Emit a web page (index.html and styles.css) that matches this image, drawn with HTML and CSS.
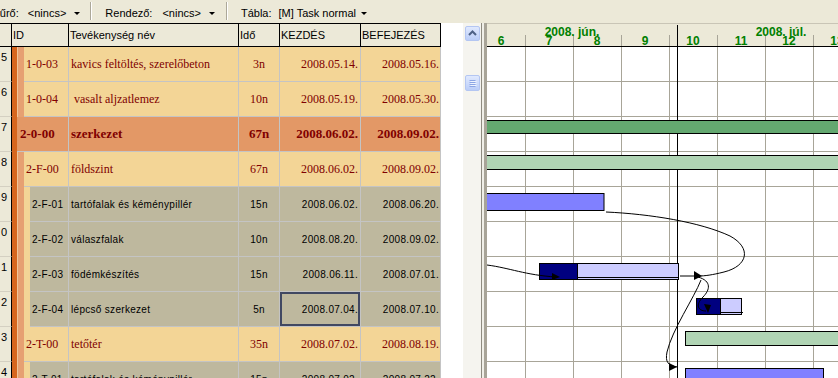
FILE: index.html
```html
<!DOCTYPE html>
<html>
<head>
	<title>Ütemterv</title>
	<link rel="stylesheet" href="styles.css">
	<meta charset="utf-8">
</head>
<body>
	<div class="toolbar">
		<span class="tb-label first">Szűrő:</span><span class="tb-value v1">&lt;nincs&gt;</span><span class="drop d1"></span>
		<span class="sep s1"></span>
		<span class="tb-label l2">Rendező:</span><span class="tb-value v2">&lt;nincs&gt;</span><span class="drop d2"></span>
		<span class="sep s2"></span>
		<span class="tb-label l3">Tábla:</span><span class="tb-value v3">[M] Task normal</span><span class="drop d3"></span>
	</div>

	<div class="main">
		<div class="table">
			<div class="thead">
				<div class="hcell rownum"></div>
				<div class="hcell h-id">ID</div>
				<div class="hcell h-name">Tevékenység név</div>
				<div class="hcell h-dur">Idő</div>
				<div class="hcell h-start">KEZDÉS</div>
				<div class="hcell h-end">BEFEJEZÉS</div>
			</div>

			<div class="row lvl2">
				<div class="rownum">5</div>
				<div class="strips"><i class="s-or"></i><i class="s-gap"></i><i class="s-sal"></i></div>
				<div class="cells">
					<div class="c-id">1-0-03</div><div class="c-name">kavics feltöltés, szerelőbeton</div><div class="c-dur">3n</div><div class="c-start">2008.05.14.</div><div class="c-end">2008.05.16.</div>
				</div>
			</div>
			<div class="row lvl2">
				<div class="rownum">6</div>
				<div class="strips"><i class="s-or"></i><i class="s-gap"></i><i class="s-sal"></i></div>
				<div class="cells">
					<div class="c-id">1-0-04</div><div class="c-name"> vasalt aljzatlemez</div><div class="c-dur">10n</div><div class="c-start">2008.05.19.</div><div class="c-end">2008.05.30.</div>
				</div>
			</div>
			<div class="row lvl1">
				<div class="rownum">7</div>
				<div class="strips"><i class="s-or"></i></div>
				<div class="cells">
					<div class="c-id">2-0-00</div><div class="c-name">szerkezet</div><div class="c-dur">67n</div><div class="c-start">2008.06.02.</div><div class="c-end">2008.09.02.</div>
				</div>
			</div>
			<div class="row lvl2">
				<div class="rownum">8</div>
				<div class="strips"><i class="s-or"></i><i class="s-gap"></i><i class="s-sal"></i></div>
				<div class="cells">
					<div class="c-id">2-F-00</div><div class="c-name">földszint</div><div class="c-dur">67n</div><div class="c-start">2008.06.02.</div><div class="c-end">2008.09.02.</div>
				</div>
			</div>
			<div class="row lvl3">
				<div class="rownum">9</div>
				<div class="strips"><i class="s-or"></i><i class="s-gap"></i><i class="s-sal"></i><i class="s-tan"></i></div>
				<div class="cells">
					<div class="c-id">2-F-01</div><div class="c-name">tartófalak és kéménypillér</div><div class="c-dur">15n</div><div class="c-start">2008.06.02.</div><div class="c-end">2008.06.20.</div>
				</div>
			</div>
			<div class="row lvl3">
				<div class="rownum">0</div>
				<div class="strips"><i class="s-or"></i><i class="s-gap"></i><i class="s-sal"></i><i class="s-tan"></i></div>
				<div class="cells">
					<div class="c-id">2-F-02</div><div class="c-name">válaszfalak</div><div class="c-dur">10n</div><div class="c-start">2008.08.20.</div><div class="c-end">2008.09.02.</div>
				</div>
			</div>
			<div class="row lvl3">
				<div class="rownum">1</div>
				<div class="strips"><i class="s-or"></i><i class="s-gap"></i><i class="s-sal"></i><i class="s-tan"></i></div>
				<div class="cells">
					<div class="c-id">2-F-03</div><div class="c-name">födémkészítés</div><div class="c-dur">15n</div><div class="c-start">2008.06.11.</div><div class="c-end">2008.07.01.</div>
				</div>
			</div>
			<div class="row lvl3">
				<div class="rownum">2</div>
				<div class="strips"><i class="s-or"></i><i class="s-gap"></i><i class="s-sal"></i><i class="s-tan"></i></div>
				<div class="cells">
					<div class="c-id">2-F-04</div><div class="c-name">lépcső szerkezet</div><div class="c-dur">5n</div><div class="c-start focus">2008.07.04.</div><div class="c-end">2008.07.10.</div>
				</div>
			</div>
			<div class="row lvl2">
				<div class="rownum">3</div>
				<div class="strips"><i class="s-or"></i><i class="s-gap"></i><i class="s-sal"></i></div>
				<div class="cells">
					<div class="c-id">2-T-00</div><div class="c-name">tetőtér</div><div class="c-dur">35n</div><div class="c-start">2008.07.02.</div><div class="c-end">2008.08.19.</div>
				</div>
			</div>
			<div class="row lvl3">
				<div class="rownum">4</div>
				<div class="strips"><i class="s-or"></i><i class="s-gap"></i><i class="s-sal"></i><i class="s-tan"></i></div>
				<div class="cells">
					<div class="c-id">2-T-01</div><div class="c-name">tartófalak és kéménypillér</div><div class="c-dur">15n</div><div class="c-start">2008.07.02.</div><div class="c-end">2008.07.22.</div>
				</div>
			</div>
		</div>

		<div class="blank"></div>

		<div class="scroll">
			<div class="sbtn">
				<svg width="13" height="13" viewBox="0 0 13 13"><path d="M3 8 L6.5 4.5 L10 8" fill="none" stroke="#4D6185" stroke-width="2"/></svg>
			</div>
			<div class="sbtn thumb">
				<svg width="13" height="14" viewBox="0 0 13 14"><path d="M3.5 4.5H9.5M3.5 6.5H9.5M3.5 8.5H9.5M3.5 10.5H9.5" stroke="#8CA5E4"/><path d="M4.5 5.5H10.5M4.5 7.5H10.5M4.5 9.5H10.5" stroke="#EEF4FE"/></svg>
			</div>
		</div>

		<div class="splitter"></div>

		<!-- gantt canvas, drawn in page coordinates -->
		<svg class="chart" width="351" height="355" viewBox="487 23 351 355">
			<rect x="487" y="23" width="351" height="23" fill="#ECE9D8"/>
			<path d="M487 23.5H838" stroke="#C9C5B6"/>
			<g stroke="#A8A598">
				<path d="M525.5 35V46M573.5 35V46M621.5 35V46M669.5 35V46M717.5 35V46M765.5 35V46M813.5 35V46"/>
			</g>
			<g class="months">
				<text x="572" y="36">2008. jún.</text>
				<text x="781" y="36">2008. júl.</text>
			</g>
			<g class="days">
				<text x="501" y="45">6</text>
				<text x="549" y="45">7</text>
				<text x="597" y="45">8</text>
				<text x="645" y="45">9</text>
				<text x="693" y="45">10</text>
				<text x="741" y="45">11</text>
				<text x="789" y="45">12</text>
				<text x="837" y="45">13</text>
			</g>
			<path d="M487 46.5H838" stroke="#000"/>

			<rect x="487" y="47" width="351" height="331" fill="#fff"/>
			<g stroke="#A8A598">
				<path d="M525.5 47V378M573.5 47V378M621.5 47V378M669.5 47V378M717.5 47V378M765.5 47V378M813.5 47V378"/>
				<path d="M487 81.5H838M487 116.5H838M487 151.5H838M487 186.5H838M487 221.5H838M487 256.5H838M487 291.5H838M487 326.5H838M487 361.5H838"/>
			</g>
			<path d="M677.5 25V378" stroke="#000"/>

			<g stroke="#000">
				<rect x="485" y="120.5" width="360" height="13" fill="#64A870"/>
				<rect x="485" y="155.5" width="360" height="14" fill="#B0D4B4"/>
				<rect x="485" y="193.5" width="119" height="17" fill="#8080FF"/>
				<rect x="539.5" y="263.5" width="38" height="16" fill="#000080"/>
				<rect x="577.5" y="263.5" width="101" height="16" fill="#CCCCFF"/>
				<path d="M577 277.5H679"/>
				<rect x="696.5" y="298.5" width="24" height="16" fill="#000080"/>
				<rect x="720.5" y="298.5" width="21" height="16" fill="#CCCCFF"/>
				<path d="M720 312.5H743"/>
				<rect x="685.5" y="331.5" width="160" height="14" fill="#B0D4B4"/>
				<rect x="685.5" y="368.5" width="138" height="17" fill="#8080FF"/>
			</g>

			<g fill="none" stroke="#000">
				<path d="M487 265 C510 268, 525 275, 556 277"/>
				<path d="M606 212 C650 214, 700 222, 730 236 C752 248, 748 266, 724 272 C712 275, 705 276, 698 276"/>
				<path d="M680 276 L700 276"/>
				<path d="M698 277 C712 281, 710 290, 703 297 C695 305, 698 311, 706 311"/>
				<path d="M701 280 C694 298, 672 330, 667 352 C665 362, 668 366, 678 367"/>
			</g>
			<g fill="#000">
				<polygon points="552,273 560,277 552,280"/>
				<polygon points="694,271 702,276 694,280"/>
				<polygon points="704,304 711,305 708,313"/>
				<polygon points="669,363 677,367 669,371"/>
			</g>
		</svg>
	</div>
</body>
</html>
```

FILE: styles.css
```css
html, body {
	margin: 0;
	padding: 0;
}

body {
	width: 838px;
	height: 378px;
	overflow: hidden;
	background: #ECE9D8;
	font-family: "Liberation Sans", Arial, sans-serif;
	font-size: 11px;
	color: #000;
}

/* toolbar */

.toolbar {
	display: flex;
	align-items: center;
	height: 23px;
	box-sizing: border-box;
	padding-top: 3px;
	background: #ECE9D8;
	white-space: nowrap;
	overflow: hidden;
}

.first { margin-left: -13px; }
.v1 { margin-left: 9px; }
.d1 { margin-left: 8px; }
.s1 { margin-left: 10px; }
.l2 { margin-left: 13px; }
.v2 { margin-left: 10px; }
.d2 { margin-left: 8px; }
.s2 { margin-left: 11px; }
.l3 { margin-left: 13px; }
.v3 { margin-left: 7px; }
.d3 { margin-left: 5px; }

.drop {
	width: 0;
	height: 0;
	border-left: 3px solid transparent;
	border-right: 3px solid transparent;
	border-top: 3px solid #000;
	margin-top: 1px;
}

.sep {
	align-self: flex-start;
	margin-top: -1px;
	width: 1px;
	height: 18px;
	background: #ACA899;
	border-right: 1px solid #fff;
}

/* layout */

.main {
	display: flex;
	height: 355px;
	overflow: hidden;
}

.table {
	width: 441px;
	flex: none;
	background: #fff;
}

.blank {
	width: 22px;
	flex: none;
	background: #fff;
}

.scroll {
	width: 18px;
	flex: none;
	box-sizing: border-box;
	padding: 3px 0 0 2px;
	background: #F5F4EF;
}

.sbtn {
	width: 15px;
	height: 15px;
	box-sizing: border-box;
	border: 1px solid #B4C6F2;
	border-radius: 2px;
	background: linear-gradient(#E0E9FE, #BACDF8);
}

.thumb {
	margin-top: 34px;
	height: 16px;
}

.sbtn svg {
	display: block;
}

.splitter {
	width: 6px;
	flex: none;
	background: linear-gradient(to right, #8E8B80 0 1px, #F0EFE8 1px 3px, #A8A498 3px 6px);
}

.chart {
	display: block;
	flex: none;
}

.months text, .days text {
	font-family: "Liberation Sans", Arial, sans-serif;
	font-size: 12px;
	font-weight: bold;
	fill: #008000;
	text-anchor: middle;
}

/* grid header */

.thead {
	display: flex;
	height: 24px;
	box-sizing: border-box;
	border-top: 1px solid #000;
	border-bottom: 1px solid #000;
	background: #ECE9D8;
}

.hcell {
	box-sizing: border-box;
	border-right: 1px solid #000;
	padding-left: 1px;
	line-height: 22px;
	white-space: nowrap;
	overflow: hidden;
}

.hcell.rownum { width: 12px; padding: 0; }
.h-id { width: 57px; }
.h-name { width: 170px; }
.h-dur { width: 41px; }
.h-start { width: 81px; }
.h-end { width: 80px; }

/* grid rows */

.row {
	display: flex;
	height: 35px;
}

.row > .rownum {
	width: 12px;
	flex: none;
	box-sizing: border-box;
	padding: 4px 0 0 1px;
	background: #ECE9D8;
	border-right: 1px solid #000;
	border-bottom: 1px solid #D4D0C2;
	font-size: 11px;
	line-height: 13px;
	overflow: hidden;
}

.strips {
	display: flex;
	flex: none;
}

.strips i {
	display: block;
	height: 100%;
}

.s-or { width: 5px; background: #D6661E; }
.s-gap { width: 1px; background: #F0C59A; }
.s-sal { width: 6px; background: #E6A072; }
.s-tan { width: 6px; background: #F3D596; }

.cells {
	flex: 1;
	display: flex;
	box-sizing: border-box;
	border-bottom: 1px solid #C4C4C4;
}

.cells > div {
	box-sizing: border-box;
	border-right: 1px solid #C4C4C4;
	display: flex;
	align-items: center;
	white-space: pre;
	overflow: hidden;
}

.c-id { flex: 1; padding-left: 2px; }
.c-name { width: 170px; flex: none; padding-left: 2px; }
.c-dur { width: 41px; flex: none; justify-content: center; }
.c-start { width: 81px; flex: none; justify-content: flex-end; padding-right: 2px; }
.c-end { width: 80px; flex: none; justify-content: flex-end; padding-right: 1px; }

.lvl1 .cells, .lvl2 .cells {
	font-family: "Liberation Serif", "Times New Roman", serif;
	font-size: 12px;
	color: #800000;
}

.lvl1 .cells {
	background: #E39866;
	font-weight: bold;
	font-size: 13px;
}

.lvl1 .c-id { padding-left: 3px; }

.lvl2 .cells {
	background: #F3D596;
}

.lvl3 .cells {
	background: #BEB89E;
	font-size: 10px;
	letter-spacing: 0.3px;
}

.focus {
	box-shadow: inset 0 0 0 2px #414862;
}
```
